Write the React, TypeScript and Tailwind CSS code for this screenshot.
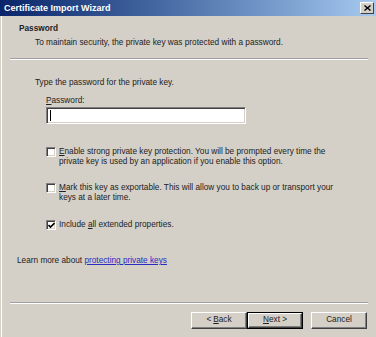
import React from "react";

function Check({ checked }: { checked?: boolean }) {
  return (
    <div className="w-[10px] h-[10px] shrink-0 bg-white border-t border-l border-t-[#808080] border-l-[#808080] border-b border-r border-b-white border-r-white shadow-[inset_1px_1px_0_#404040,inset_-1px_-1px_0_#d4d0c8] flex items-center justify-center">
      {checked && (
        <svg width="7" height="7" viewBox="0 0 7 7">
          <path d="M0.5 3 L2.5 5 L6.5 1" stroke="#000" strokeWidth="1.6" fill="none" />
        </svg>
      )}
    </div>
  );
}

function Btn({ children, isDefault }: { children: React.ReactNode; isDefault?: boolean }) {
  const inner = (
    <div className="w-full h-full bg-[#d4d0c8] border-t border-l border-t-white border-l-white border-b border-r border-b-[#404040] border-r-[#404040] shadow-[inset_-1px_-1px_0_#808080] flex items-center justify-center text-[8.25px] leading-none">
      {children}
    </div>
  );
  return isDefault ? (
    <div className="w-[56px] h-[17px] border border-black">{inner}</div>
  ) : (
    <div className="w-[56px] h-[17px]">{inner}</div>
  );
}

function Etched() {
  return (
    <div className="ml-[10px] mr-[8px]">
      <div className="h-px bg-[#a0a0a0]" />
      <div className="h-px bg-white" />
    </div>
  );
}

export default function App() {
  return (
    <div className="w-[376px] h-[337px] bg-[#d4d0c8] flex flex-col overflow-hidden text-[#222222] font-['Liberation_Sans',Arial,sans-serif] text-[8.25px] leading-[10px] shadow-[inset_1px_0_0_#d4d0c8,inset_2px_0_0_#ffffff]">
      {/* title bar */}
      <div className="h-[16px] shrink-0 flex items-center justify-between pl-[4px] pr-[2px] bg-gradient-to-r from-[#0a246a] to-[#a6caf0]">
        <span className="text-white font-bold text-[9px] leading-none">Certificate Import Wizard</span>
        <div className="w-[14px] h-[12px] bg-[#d4d0c8] border-t border-l border-t-white border-l-white border-b border-r border-b-[#404040] border-r-[#404040] flex items-center justify-center">
          <svg width="7" height="6" viewBox="0 0 7 6">
            <path d="M0.5 0.5 L6.5 5.5 M6.5 0.5 L0.5 5.5" stroke="#000" strokeWidth="1.4" />
          </svg>
        </div>
      </div>

      {/* header */}
      <div className="pl-[19px] mt-[8px] font-bold">Password</div>
      <div className="pl-[35px] mt-[4px]">To maintain security, the private key was protected with a password.</div>
      <div className="mt-[10px]">
        <Etched />
      </div>

      {/* body */}
      <div className="pl-[35px] mt-[18px]">Type the password for the private key.</div>
      <div className="pl-[46px] mt-[8px]">
        <span className="underline">P</span>assword:
      </div>
      <div className="pl-[46px] mt-[1px]">
        <div className="w-[200px] h-[17px] bg-white border-t border-l border-t-[#808080] border-l-[#808080] border-b border-r border-b-white border-r-white shadow-[inset_1px_1px_0_#404040,inset_-1px_-1px_0_#d4d0c8] flex items-center pl-[3px]">
          <div className="w-px h-[11px] bg-black" />
        </div>
      </div>

      <div className="pl-[46px] mt-[23px] flex gap-[3px]">
        <Check />
        <div>
          <span className="underline">E</span>nable strong private key protection. You will be prompted every time the
          <br />
          private key is used by an application if you enable this option.
        </div>
      </div>
      <div className="pl-[46px] mt-[16px] flex gap-[3px]">
        <Check />
        <div>
          <span className="underline">M</span>ark this key as exportable. This will allow you to back up or transport your
          <br />
          keys at a later time.
        </div>
      </div>
      <div className="pl-[46px] mt-[17px] flex gap-[3px]">
        <Check checked />
        <div>
          Include <span className="underline">a</span>ll extended properties.
        </div>
      </div>

      <div className="pl-[17px] mt-[26px]">
        Learn more about <span className="text-[#2a2ac0] underline">protecting private keys</span>
      </div>

      {/* footer */}
      <div className="mt-auto">
        <Etched />
        <div className="flex justify-end pr-[9px] pt-[8px] pb-[8px]">
          <Btn>
            &lt; <span className="underline ml-[2px]">B</span>ack
          </Btn>
          <Btn isDefault>
            <span className="underline">N</span>ext &gt;
          </Btn>
          <div className="w-[8px]" />
          <Btn>Cancel</Btn>
        </div>
      </div>
    </div>
  );
}
